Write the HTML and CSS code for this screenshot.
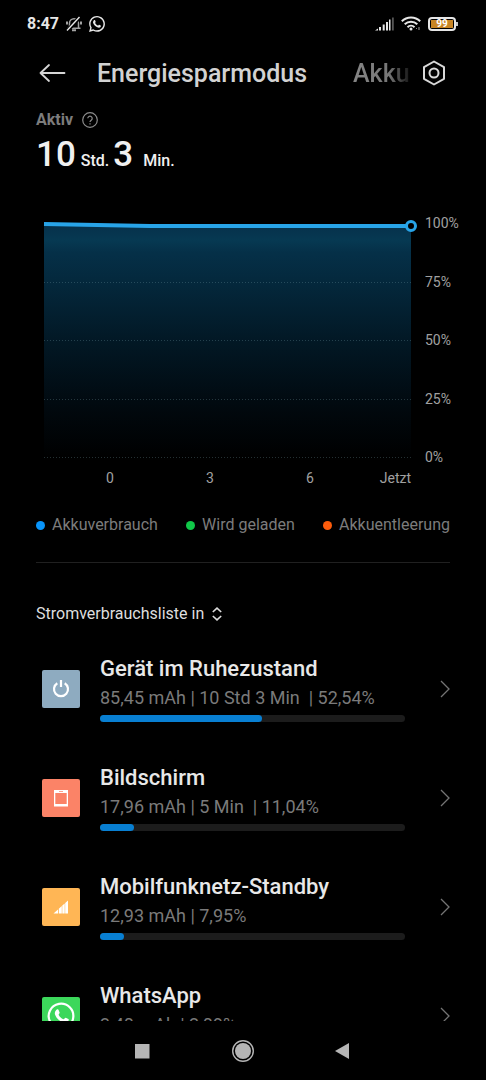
FILE: index.html
```html
<!DOCTYPE html>
<html lang="de">
<head>
<meta charset="utf-8">
<meta name="viewport" content="width=device-width, initial-scale=1">
<title>Energiesparmodus</title>
<link rel="stylesheet" href="styles.css">
</head>
<body>
<div class="screen">
  <div class="status">
    <span class="clock">8:47</span>
    <svg class="status-bell" width="16" height="16" viewBox="0 0 16 16" fill="none" stroke="#a4a4a4" stroke-width="1.5"><path d="M3.5 12V7.200a4.500 4.500 0 0 1 9 0V12M1.500 12.200h13"/><path d="M6 14.300h4M1 5.500v3M15 5.500v3" stroke-width="2"/><path d="M1 15 14 1" stroke="#000" stroke-width="4"/><path d="M1 14.500 13.500 1" stroke="#e8e8e8" stroke-width="1.400"/></svg>
    <svg width="16" height="16" viewBox="0 0 24 24" fill="#e8e8e8"><path d="M12.04 0C5.5 0 .2 5.3.2 11.8c0 2.1.6 4.1 1.6 5.9L.1 24l6.4-1.7c1.7.9 3.6 1.4 5.5 1.4 6.600 0 11.9-5.300 11.9-11.800S18.600 0 12.040 0zm0 21.500c-1.800 0-3.500-.5-5-1.400l-.4-.2-3.500.9.900-3.400-.2-.4a9.700 9.700 0 1 1 8.200 4.500z"/><path d="M7.500 6.200c.5-.5 1.300-.5 1.600.2l.9 2.100c.2.500-.9 1.500-.8 1.900.8 1.700 2.400 3.200 4.300 4 .5.200 1.200-1.300 1.800-1.100l2.200 1.100c.7.300.2 1.800-.5 2.400-1.200 1-2.900.8-4.500.2-2.800-1.100-5.500-3.900-6.300-6.400-.5-1.700.3-3.400 1.300-4.400z"/></svg>
    <span class="spacer"></span>
    <svg width="19" height="14" viewBox="0 0 19 14" fill="#e6e6e6"><path d="M0 13.500 3 11.500v2zM4 10h2v3.500H4zM7.700 7.500h2v6h-2zM11 5h2v8.500h-2zM14 2.500h1.500v11H14z"/><path d="M17 .5h1.800v13H17z" fill="#555"/></svg>
    <svg class="wifi" width="20" height="15" viewBox="0 0 20 15" fill="none" stroke="#e6e6e6" stroke-width="2"><path d="M.8 5.200a13 13 0 0 1 18.400 0M3.700 8.300a9 9 0 0 1 12.600 0M6.500 11.200a5 5 0 0 1 7 0"/><circle cx="10" cy="13" r="1.500" fill="#e6e6e6" stroke="none"/><path d="M15 12.500h1M18 11v3" stroke="#888" stroke-width="1.200"/></svg>
    <span class="battery"><span class="battery-level">99</span></span>
  </div>

  <header class="topbar">
    <button class="icon-button" aria-label="Zurück"><svg width="27" height="20" viewBox="0 0 27 20" fill="none" stroke="#d6d6d6" stroke-width="1.800" stroke-linecap="round" stroke-linejoin="round"><path d="M25.500 10H1.500M10 2 1.500 10 10 18"/></svg></button>
    <h1 class="title">Energiesparmodus</h1>
    <a class="next-tab" href="#akku">Akku</a>
    <button class="icon-button" aria-label="Einstellungen"><svg width="24" height="26" viewBox="0 0 24 26" fill="none" stroke="#d8d8d8" stroke-width="2"><path d="M12 1.500 22 7.200v11.600L12 24.500 2 18.800V7.200z" stroke-linejoin="round"/><circle cx="12" cy="13" r="4.500"/></svg></button>
  </header>

  <main class="content">
    <section class="active">
      <div class="active-label">Aktiv
        <button class="icon-button" aria-label="Hilfe"><svg width="16" height="16" viewBox="0 0 16 16" fill="none" stroke="#8c8c8c" stroke-width="1.200"><circle cx="8" cy="8" r="7.300"/><path d="M5.800 6.300a2.200 2.200 0 1 1 3.400 1.900C8.300 8.800 8 9.100 8 10M8 11.200v1.400"/></svg></button>
      </div>
      <div class="duration"><span class="number">10</span><span class="unit">Std.</span><span class="number">3</span><span class="unit">Min.</span></div>
    </section>

    <section class="chart">
      <div class="plot">
        <svg class="plot-area" viewBox="0 0 367 236" preserveAspectRatio="none">
          <defs><linearGradient id="fade" x1="0" y1="0" x2="0" y2="1"><stop offset="0" stop-color="#06304a"/><stop offset=".07" stop-color="#063952"/><stop offset=".12" stop-color="#053048"/><stop offset=".25" stop-color="#04283c"/><stop offset=".5" stop-color="#021825"/><stop offset=".8" stop-color="#01080d"/><stop offset="1" stop-color="#000"/></linearGradient></defs>
          <path d="M0 2 106 4H367V236H0z" fill="url(#fade)"/>
          <g class="gridlines"><path d="M0 60.500H367M0 118.500H367M0 177.500H367M0 235.500H367"/></g>
          <path class="level-line" d="M0 2 106 4H367"/>
        </svg>
        <span class="now-marker"></span>
      </div>
      <div class="percents"><span>100%</span><span>75%</span><span>50%</span><span>25%</span><span>0%</span></div>
      <div class="hours"><span></span><span>0</span><span>3</span><span>6</span><span class="now">Jetzt</span></div>
    </section>

    <ul class="legend">
      <li class="use">Akkuverbrauch</li>
      <li class="charging">Wird geladen</li>
      <li class="drain">Akkuentleerung</li>
    </ul>

    <button class="sort">Stromverbrauchsliste in
      <svg width="10" height="14" viewBox="0 0 10 14" fill="none" stroke="#dedede" stroke-width="1.600"><path d="M.8 5 5 1.200 9.200 5M.8 9 5 12.800 9.200 9"/></svg></button>

    <ul class="usage">
      <li><a class="row" href="#idle">
        <svg class="app" viewBox="0 0 38 38"><rect width="38" height="38" rx="2" fill="#8eabc0"/><path d="M15.300 13.200a7 7 0 1 0 7.400 0M19 10v7" fill="none" stroke="#fff" stroke-width="2.200"/></svg>
        <span class="details"><span class="name">Gerät im Ruhezustand</span><span class="values">85,45 mAh | 10 Std 3 Min&nbsp; | 52,54%</span><span class="bar"><span class="fill" style="width:53%"></span></span></span>
        <svg class="chevron" viewBox="0 0 10 18"><path d="M1 1 9 9 1 17"/></svg></a></li>
      <li><a class="row" href="#screen">
        <svg class="app" viewBox="0 0 38 38"><rect width="38" height="38" rx="2" fill="#fb8367"/><path d="M12 11h14v16.500H12zM13.300 14v11h11.400V14zM17 12v.8h4V12z" fill="#fff" fill-rule="evenodd"/></svg>
        <span class="details"><span class="name">Bildschirm</span><span class="values">17,96 mAh | 5 Min&nbsp; | 11,04%</span><span class="bar"><span class="fill" style="width:11.040%"></span></span></span>
        <svg class="chevron" viewBox="0 0 10 18"><path d="M1 1 9 9 1 17"/></svg></a></li>
      <li><a class="row" href="#mobile">
        <svg class="app" viewBox="0 0 38 38"><rect width="38" height="38" rx="2" fill="#ffb655"/><path d="M11.500 25.500 16 21.500v4zM16.800 20.800l3-2.700v7.400h-3zM20.300 17.500l2.400-2v10h-2.400zM23.200 15l2.800-2.500v13h-2.800z" fill="#fff"/></svg>
        <span class="details"><span class="name">Mobilfunknetz-Standby</span><span class="values">12,93 mAh | 7,95%</span><span class="bar"><span class="fill" style="width:7.950%"></span></span></span>
        <svg class="chevron" viewBox="0 0 10 18"><path d="M1 1 9 9 1 17"/></svg></a></li>
      <li><a class="row" href="#whatsapp">
        <svg class="app" viewBox="0 0 38 38"><rect width="38" height="38" rx="2" fill="#3cd75b"/><path d="M6.500 31.500 8.300 25A12.300 12.300 0 1 1 13 29.700z" fill="none" stroke="#fff" stroke-width="2.200"/><path d="M14.500 12.700c.8-.8 1.700-.6 2 .1l1.100 2.700c.3.700-1.200 1.900-.9 2.400 1 1.900 2.700 3.500 4.800 4.300.5.200 1.600-1.700 2.200-1.500l2.700 1.400c.8.500.1 2.200-.8 2.800-1.500 1.200-3.500.9-5.300.1-3.500-1.400-6.200-4.300-7.300-7.400-.6-2 .4-3.800 1.500-4.900z" fill="#fff"/></svg>
        <span class="details"><span class="name">WhatsApp</span><span class="values">3,40 mAh | 2,09%</span><span class="bar"><span class="fill" style="width:2.090%"></span></span></span>
        <svg class="chevron" viewBox="0 0 10 18"><path d="M1 1 9 9 1 17"/></svg></a></li>
    </ul>
  </main>

  <nav class="navigation">
    <button class="icon-button" aria-label="Letzte Apps"><svg width="24" height="24" viewBox="0 0 24 24" fill="#b5b5b5"><path d="M4 5h14.500v14.500H4z"/></svg></button>
    <button class="icon-button" aria-label="Startseite"><svg width="24" height="24" viewBox="0 0 24 24" fill="#b5b5b5"><circle cx="12" cy="12" r="8"/><circle cx="12" cy="12" r="10.300" fill="none" stroke="#b5b5b5" stroke-width="1.400"/></svg></button>
    <button class="icon-button" aria-label="Zurück"><svg width="24" height="24" viewBox="0 0 24 24" fill="#b5b5b5"><path d="M18 4v16L4 12z"/></svg></button>
  </nav>
</div>
</body>
</html>
```
FILE: styles.css
```css
* { box-sizing: border-box; }
body { margin: 0; background: #000; color: #e6e6e6; font-family: Roboto, sans-serif; }
ul { list-style: none; margin: 0; padding: 0; }
button { font: inherit; color: inherit; background: none; border: 0; padding: 0; }
a { color: inherit; text-decoration: none; }
svg { display: block; flex: none; }

.screen { display: flex; flex-direction: column; height: 100vh; overflow: hidden; }
.icon-button { display: flex; flex: none; }

.status { display: flex; align-items: center; gap: 7px; height: 47px; padding: 0 30px 0 27px; flex: none; }
.clock { font-size: 16px; font-weight: 700; line-height: 20px; }
.spacer { flex: 1; }
.battery {
  position: relative; width: 28px; height: 14px; padding: 1px;
  border: 2px solid #e6e6e6; border-radius: 4px;
}
.battery::after {
  content: ""; position: absolute; right: -4px; top: 3px;
  width: 2px; height: 4px; background: #c8c8c8;
}
.battery-level {
  display: block; height: 8px; background: #c98524; color: #fff;
  font-size: 10px; font-weight: 700; line-height: 8px; text-align: center;
}

.topbar { display: flex; align-items: center; height: 52px; padding: 0 40px 0 39px; flex: none; }
.title { margin: 0 0 0 31px; padding-top: 2px; font-size: 25px; font-weight: 500; line-height: 32px; color: #d2d2d2; }
.next-tab {
  flex: 1; margin-left: 46px; padding-top: 2px; overflow: hidden; font-size: 25px; font-weight: 500; line-height: 32px;
  color: transparent; background: linear-gradient(90deg, #858585 0, #777 36px, #111 58px); background-clip: text;
}

.content { flex: 1; min-height: 0; overflow: hidden; padding: 10px 36px 0; }
.active-label { display: flex; align-items: center; gap: 9px; font-size: 16px; font-weight: 700; line-height: 22px; color: #7c7c7c; }
.duration { display: flex; align-items: baseline; padding-top: 2px; color: #f0f0f0; line-height: 44px; }
.number { font-size: 35px; font-weight: 500; }
.unit { font-size: 16px; font-weight: 500; margin: 0 4px 0 10px; }
.number:first-child + .unit { margin-left: 5px; }

.chart { display: grid; grid-template-columns: 1fr 39px; margin: 31px 0 0 8px; color: #a0a0a0; font-size: 14px; line-height: 16px; }
.plot { position: relative; padding-top: 8px; }
.plot-area { width: 100%; height: 236px; overflow: visible; }
.gridlines { fill: none; stroke: #78a0aa; stroke-opacity: .3; stroke-dasharray: 1 2; }
.level-line { fill: none; stroke: #28a4e8; stroke-width: 4; }
.now-marker {
  position: absolute; right: -6px; top: 6px; width: 12px; height: 12px;
  border: 3px solid #28a4e8; border-radius: 50%; background: #000;
}
.percents { display: flex; flex-direction: column; justify-content: space-between; padding: 1px 0 0 14px; height: 251px; }
.hours { display: grid; grid-template-columns: 16fr 100fr 100fr 100fr 51fr; margin-top: 5px; text-align: center; }
.now { text-align: right; }

.legend {
  display: flex; justify-content: space-between; padding: 29px 0 27px; border-bottom: 1px solid #202020;
  font-size: 16px; line-height: 20px; color: #7c7c7c; 
}
.legend li { display: flex; align-items: center; gap: 7px; white-space: nowrap; }
.legend li::before { content: ""; width: 9px; height: 9px; border-radius: 50%; background: var(--dot); }
.use { --dot: #0894fa; }
.charging { --dot: #10c848; }
.drain { --dot: #fc5c0c; }

.sort { display: flex; align-items: center; gap: 8px; margin: 40px 0 9px; font-size: 16px; line-height: 22px; color: #dedede; }

.row { display: flex; align-items: center; height: 109px; }
.app { width: 38px; height: 38px; margin: 0 20px 0 6px; }
.details { flex: 1; display: flex; flex-direction: column; }
.name { font-size: 22px; font-weight: 500; line-height: 28px; color: #e8e8e8; }
.values { margin: 3px 0 5px; font-size: 18px; line-height: 24px; color: #7a7a7a; }
.bar { height: 7px; border-radius: 4px; background: #1c1c1c; }
.fill { display: block; height: 100%; border-radius: 4px; background: #087fd2; }
.chevron { width: 10px; height: 18px; margin-left: 35px; fill: none; stroke: #747474; stroke-width: 1.3; }

.navigation { display: flex; justify-content: center; align-items: center; gap: 76px; height: 59px; flex: none; }
```
